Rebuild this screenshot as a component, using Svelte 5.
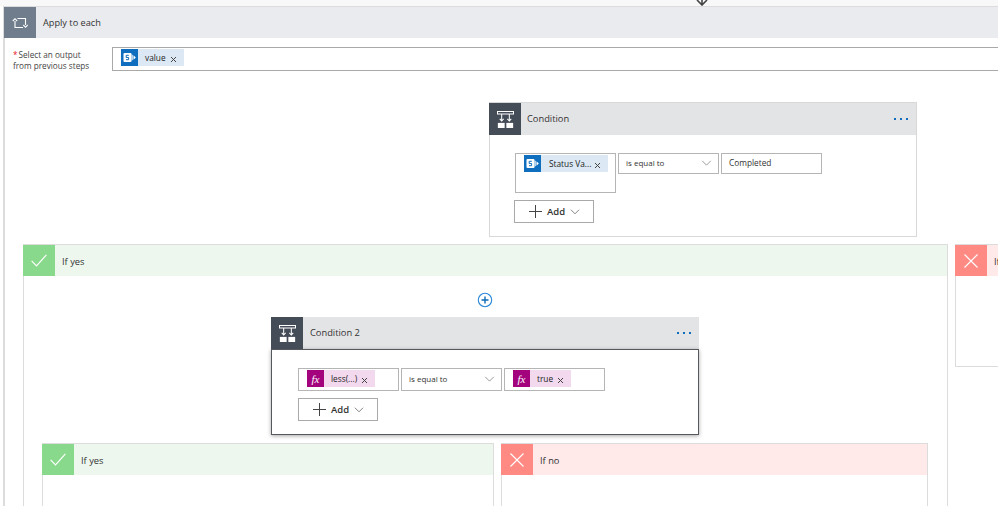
<script lang="ts">
  // Flow designer canvas: apply-to-each loop holding nested conditions.
</script>

{#snippet spIcon()}
  <span class="token-icon sp">
    <svg viewBox="0 0 17 17" width="17" height="17">
      <rect x="2.5" y="4" width="8" height="9" rx="1" fill="#fff"/>
      <path d="M10.5 5.5c1.5 0 2.2 1.2 2.2 3s-.7 3-2.2 3z" fill="#fff" opacity=".7"/>
      <path d="M12.8 6.5l2 2-2 2z" fill="#fff"/>
      <path d="M7.8 6.3H5.2v2.2h2.4v2.2H5" fill="none" stroke="#106ebe" stroke-width="1"/>
    </svg>
  </span>
{/snippet}

{#snippet fxIcon()}
  <span class="token-icon fx"><i>fx</i></span>
{/snippet}

{#snippet closeX()}
  <svg class="close" viewBox="0 0 7 7" width="7" height="7">
    <path d="M1 1l5 5M6 1l-5 5" stroke="#444" stroke-width="1" fill="none"/>
  </svg>
{/snippet}

{#snippet conditionIcon()}
  <svg viewBox="0 0 20 20" width="17" height="17" fill="none">
    <path d="M.6.6h18.8v3H.6z" stroke="#fff" stroke-width="1.2"/>
    <path d="M5.5 3.5v8M14.5 3.5v8" stroke="#fff" stroke-width="1.2"/>
    <path d="M3.2 9.2l2.3 2.5 2.3-2.5M12.2 9.2l2.3 2.5 2.3-2.5" stroke="#fff" stroke-width="1.2"/>
    <rect x="1" y="14" width="8" height="6" fill="#fff"/>
    <rect x="11" y="14" width="8" height="6" fill="#fff"/>
  </svg>
{/snippet}

{#snippet chevron()}
  <svg class="chev" viewBox="0 0 12 7" width="11" height="6">
    <path d="M1 1l5 5 5-5" stroke="#8a8a8a" stroke-width="1" fill="none"/>
  </svg>
{/snippet}

{#snippet addButton()}
  <button class="add">
    <svg viewBox="0 0 13 13" width="13" height="13">
      <path d="M6.5 0v13M0 6.5h13" stroke="#444" stroke-width="1"/>
    </svg>
    <span>Add</span>
    <svg viewBox="0 0 11 6" width="10" height="6">
      <path d="M1 .5l4.5 4.5L10 .5" stroke="#777" stroke-width="1" fill="none"/>
    </svg>
  </button>
{/snippet}

{#snippet dots()}
  <span class="dots"><b></b><b></b><b></b></span>
{/snippet}

{#snippet branchHead(kind: string, label: string)}
  <header class="branch-head {kind}">
    <span class="branch-icon">
      {#if kind === 'yes'}
        <svg viewBox="0 0 18 14" width="16" height="13">
          <path d="M.7 7.5l5.5 5.5L17.3.7" stroke="#fff" stroke-width="1.3" fill="none"/>
        </svg>
      {:else}
        <svg viewBox="0 0 14 14" width="14" height="14">
          <path d="M.5.5l13 13M13.5.5l-13 13" stroke="#fff" stroke-width="1.1" fill="none"/>
        </svg>
      {/if}
    </span>
    <span class="branch-title">{label}</span>
  </header>
{/snippet}

<div class="canvas">
  <svg class="entry-arrow" viewBox="0 0 12 6" width="12" height="6">
    <path d="M1 0l5 5 5-5M6 0v5" stroke="#444" stroke-width="1.6" fill="none"/>
  </svg>

  <section class="loop">
    <header class="loop-head">
      <span class="loop-icon">
        <svg viewBox="0 0 16 14" width="16" height="14" fill="none">
          <path d="M3 5v6.5h8M13.5 9V2.5H5.5" stroke="#fff" stroke-width="1.1"/>
          <path d="M.8 5L3 2.7 5.2 5M11.3 9l2.2 2.3L15.7 9" stroke="#fff" stroke-width="1.1"/>
        </svg>
      </span>
      <span class="loop-title">Apply to each</span>
    </header>

    <div class="output-row">
      <div class="output-label"><em>*</em>Select an output<br/>from previous steps</div>
      <div class="output-input">
        <span class="token sp-token">{@render spIcon()}<span class="token-text">value</span>{@render closeX()}</span>
      </div>
    </div>

    <article class="condition first">
      <header class="cond-head">
        <span class="cond-icon">{@render conditionIcon()}</span>
        <span class="cond-title">Condition</span>
        {@render dots()}
      </header>
      <div class="cond-body">
        <div class="fields">
          <div class="field tall">
            <span class="token sp-token status">{@render spIcon()}<span class="token-text">Status Va...</span>{@render closeX()}</span>
          </div>
          <div class="field select"><span>is equal to</span>{@render chevron()}</div>
          <div class="field value">Completed</div>
        </div>
        {@render addButton()}
      </div>
    </article>

    <div class="branches top">
      <section class="branch outer-yes">
        {@render branchHead('yes', 'If yes')}
        <div class="plus-row">
          <svg viewBox="0 0 16 16" width="16" height="16" fill="none">
            <circle cx="8" cy="8" r="6.7" fill="#fff" stroke="#2b88d8" stroke-width="1.1"/>
            <path d="M8 4.5v7M4.5 8h7" stroke="#0b6ab8" stroke-width="1.4"/>
          </svg>
        </div>

        <article class="condition second">
          <header class="cond-head">
            <span class="cond-icon">{@render conditionIcon()}</span>
            <span class="cond-title">Condition 2</span>
            {@render dots()}
          </header>
          <div class="cond-body">
            <div class="fields">
              <div class="field">
                <span class="token fx-token">{@render fxIcon()}<span class="token-text">less(...)</span>{@render closeX()}</span>
              </div>
              <div class="field select"><span>is equal to</span>{@render chevron()}</div>
              <div class="field">
                <span class="token fx-token">{@render fxIcon()}<span class="token-text">true</span>{@render closeX()}</span>
              </div>
            </div>
            {@render addButton()}
          </div>
        </article>

        <div class="branches inner">
          <section class="branch inner-yes">{@render branchHead('yes', 'If yes')}</section>
          <section class="branch inner-no">{@render branchHead('no', 'If no')}</section>
        </div>
      </section>

      <section class="branch outer-no">
        {@render branchHead('no', 'If no')}
      </section>
    </div>
  </section>
</div>

<style>
  :global(body) {
    margin: 0;
  }

  .canvas {
    position: relative;
    width: 998px;
    height: 506px;
    overflow: hidden;
    background: linear-gradient(#f8f8f8 6px, #fff 6px);
    font-family: "Open Sans", "Noto Sans", sans-serif;
    font-size: 8.3px;
    color: #333;
    padding-top: 6px;
    box-sizing: border-box;
  }

  .entry-arrow {
    position: absolute;
    top: 0;
    left: 696px;
  }

  .loop {
    width: 1200px;
    height: 600px;
    margin-left: 3px;
    background: #fff;
    border: 1px solid #dcdcdc;
    border-width: 1px 2px;
    box-sizing: border-box;
  }

  .loop-head {
    display: flex;
    align-items: center;
    height: 31px;
    background: #e9ebee;
    margin-left: -1px;
  }

  .loop-icon {
    display: flex;
    align-items: center;
    justify-content: center;
    width: 32px;
    height: 31px;
    background: #6f7d8c;
  }

  .loop-title {
    margin-left: 7px;
    font-size: 9.2px;
  }

  .output-row {
    display: flex;
    height: 24px;
    margin-top: 9px;
  }

  .output-label {
    width: 99px;
    margin: 2px 0 0 8px;
    line-height: 11px;
    font-size: 8.2px;
    color: #444;
  }

  .output-label em {
    color: #e81123;
    font-style: normal;
    margin-right: 1px;
  }

  .output-input {
    display: flex;
    align-items: flex-start;
    width: 1000px;
    height: 24px;
    box-sizing: border-box;
    padding: 1px 8px;
    border: 1px solid #a9a9a9;
  }

  .token {
    display: inline-flex;
    align-items: center;
    height: 17px;
    padding-right: 7px;
    font-size: 8.3px;
    color: #222;
  }

  .sp-token {
    background: #dce9f5;
  }

  .fx-token {
    background: #f3d9ee;
  }

  .token-icon {
    display: flex;
    align-items: center;
    justify-content: center;
    width: 17px;
    height: 17px;
    flex: none;
  }

  .sp {
    background: #106ebe;
  }

  .fx {
    background: #a4037e;
    color: #fff;
  }

  .fx i {
    font-family: "Liberation Serif", serif;
    font-size: 11px;
  }

  .token-text {
    margin-left: 7px;
  }

  .close {
    margin: 3px 0 0 4px;
  }

  .condition {
    width: 428px;
    box-sizing: border-box;
  }

  .condition.first {
    margin: 31px 0 0 484px;
    border: 1px solid #d8d8d8;
    height: 135px;
  }

  .condition.second {
    margin: 9px 0 0 247px;
    height: 118px;
  }

  .cond-head {
    display: flex;
    align-items: center;
    height: 32px;
    background: #e3e4e6;
  }

  .first .cond-head {
    margin-left: -1px;
  }

  .cond-icon {
    display: flex;
    align-items: center;
    justify-content: center;
    width: 32px;
    height: 32px;
    background: #444c58;
  }

  .cond-title {
    margin: -1px 0 0 7px;
    font-size: 9.3px;
  }

  .first .cond-title {
    margin-left: 6px;
  }

  .dots {
    display: flex;
    gap: 4px;
    margin-left: auto;
    margin-right: 8px;
  }

  .dots b {
    width: 2px;
    height: 2px;
    background: #0f6cbd;
  }

  .cond-body {
    padding: 18px 0 0 24px;
  }

  .second .cond-body {
    height: 86px;
    box-sizing: border-box;
    padding: 18px 0 0 26px;
    border: 1px solid #55585c;
    box-shadow: 0 1px 4px rgba(0, 0, 0, .35);
  }

  .fields {
    display: flex;
    align-items: flex-start;
    gap: 2px;
    margin-left: 1px;
  }

  .second .fields {
    margin-left: 0;
  }

  .field {
    display: flex;
    align-items: center;
    width: 101px;
    height: 23px;
    box-sizing: border-box;
    padding: 0 0 2px 8px;
    border: 1px solid #b5b5b5;
    font-size: 8.3px;
  }

  .field.tall {
    height: 40px;
    align-items: flex-start;
    padding: 1px 0 0 8px;
  }

  .first .field {
    height: 21px;
  }

  .first .field.tall {
    height: 40px;
  }

  .field.select {
    justify-content: space-between;
    padding: 0 6px 2px 7px;
    font-size: 8px;
  }

  .field.value {
    padding: 0 0 2px 7px;
  }

  .status {
    padding-right: 7px;
  }

  .status .token-text {
    margin-left: 8px;
  }

  .status .close {
    margin-left: 3px;
  }

  .add {
    display: flex;
    align-items: center;
    gap: 5px;
    width: 80px;
    height: 23px;
    margin-top: 7px;
    padding: 0 0 0 14px;
    box-sizing: border-box;
    border: 1px solid #a9a9a9;
    background: #fff;
    font-family: inherit;
    font-size: 9.5px;
    font-weight: 600;
    color: #333;
  }

  .branches {
    display: flex;
  }

  .branches.top {
    gap: 7px;
    margin: 7px 0 0 18px;
  }

  .branches.inner {
    gap: 7px;
    margin: 8px 0 0 18px;
  }

  .branch {
    border: 1px solid #dcdcdc;
    box-sizing: border-box;
    flex: none;
  }

  .outer-yes {
    width: 925px;
    height: 400px;
  }

  .outer-no {
    width: 200px;
    height: 123px;
  }

  .inner-yes {
    width: 452px;
    height: 200px;
  }

  .inner-no {
    width: 427px;
    height: 200px;
  }

  .branch-head {
    display: flex;
    align-items: center;
    height: 31px;
    margin-left: -1px;
  }

  .branch-head.yes {
    background: #edf7ee;
  }

  .branch-head.no {
    background: #ffe9e9;
  }

  .branch-icon {
    display: flex;
    align-items: center;
    justify-content: center;
    width: 32px;
    height: 31px;
  }

  .yes .branch-icon {
    background: #89d98c;
  }

  .no .branch-icon {
    background: #ff8a84;
  }

  .branch-title {
    margin: 1px 0 0 7px;
    font-size: 9.3px;
  }

  .plus-row {
    display: flex;
    justify-content: center;
    margin: 16px 0 0 -2px;
    height: 16px;
  }
</style>
